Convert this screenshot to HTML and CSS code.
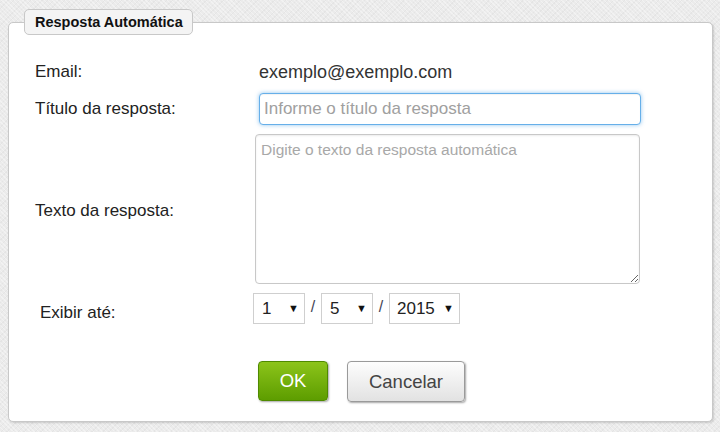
FILE: index.html
```html
<!DOCTYPE html>
<html lang="pt">
<head>
<meta charset="utf-8">
<link rel="stylesheet" href="styles.css">
</head>
<body>
<div class="panel">
  <div class="legend">Resposta Automática</div>
  <div class="form">
    <div class="row row-email">
      <div class="label">Email:</div>
      <div class="value">exemplo@exemplo.com</div>
    </div>
    <div class="row row-title">
      <div class="label">Título da resposta:</div>
      <input class="input focus" type="text" placeholder="Informe o título da resposta">
    </div>
    <div class="row row-text">
      <div class="label">Texto da resposta:</div>
      <textarea class="textarea" placeholder="Digite o texto da resposta automática"></textarea>
    </div>
    <div class="row row-date">
      <div class="label label-date">Exibir até:</div>
      <div class="date">
        <div class="sel sel-sm"><span>1</span><span class="arrow">▼</span></div>
        <span class="slash">/</span>
        <div class="sel sel-sm"><span>5</span><span class="arrow">▼</span></div>
        <span class="slash">/</span>
        <div class="sel sel-lg"><span>2015</span><span class="arrow">▼</span></div>
      </div>
    </div>
    <div class="actions">
      <button class="btn btn-ok">OK</button>
      <button class="btn btn-cancel">Cancelar</button>
    </div>
  </div>
</div>
</body>
</html>
```
FILE: styles.css
```css
* { box-sizing: border-box; }
html, body { margin: 0; padding: 0; }
body {
  width: 720px;
  height: 432px;
  overflow: hidden;
  font-family: "Liberation Sans", Arial, sans-serif;
  background-color: #ebebeb;
  background-image:
    repeating-linear-gradient(45deg, rgba(255,255,255,0.35) 0 1px, transparent 1px 3px),
    repeating-linear-gradient(-45deg, rgba(0,0,0,0.03) 0 1px, transparent 1px 4px);
  padding-top: 22px;
}
.panel {
  position: relative;
  margin: 0 7px 0 8px;
  height: 400px;
  background: #fff;
  border: 1px solid #c8c8c8;
  border-radius: 5px;
  box-shadow: 1px 1px 2px rgba(0,0,0,0.15);
}
.legend {
  position: absolute;
  left: 15px;
  top: -14px;
  width: 169px;
  height: 26px;
  background: #f4f4f4;
  border: 1px solid #c8c8c8;
  border-radius: 5px;
  font-weight: bold;
  font-size: 14.5px;
  color: #111;
  padding-left: 10px;
  line-height: 24px;
}
.form {
  padding: 39px 0 0 26px;
  display: flex;
  flex-direction: column;
}
.row {
  display: flex;
  align-items: center;
}
.label {
  width: 224px;
  flex: none;
  font-size: 17px;
  color: #222;
  line-height: 20px;
}
.value {
  font-size: 18px;
  color: #333;
  line-height: 20px;
}
.row-email { height: 20px; }
.row-title { margin-top: 11px; }
.input {
  width: 382px;
  height: 32px;
  border: 1px solid #66afe9;
  border-radius: 4px;
  box-shadow: 0 0 4px rgba(102,175,233,0.7), inset 0 1px 1px rgba(0,0,0,0.05);
  font-family: inherit;
  font-size: 17px;
  padding: 0 4px;
  outline: none;
  color: #333;
}
.input::placeholder { color: #a0a0a0; }
.row-text { margin-top: 9px; }
.row-text .label { padding-top: 3px; }
.textarea {
  width: 385px;
  height: 150px;
  margin-left: -4px;
  border: 1px solid #c8c8c8;
  border-radius: 4px;
  box-shadow: inset 0 1px 2px rgba(0,0,0,0.08);
  font-family: inherit;
  font-size: 15.5px;
  padding: 6px 5px;
  resize: both;
  outline: none;
}
.textarea::placeholder { color: #a8a8a8; }
.row-date { margin-top: 9px; }
.label-date { padding-left: 5px; padding-top: 9px; }
.date {
  margin-left: -6px;
  display: flex;
  align-items: center;
}
.sel {
  position: relative;
  height: 31px;
  border: 1px solid #cfcfcf;
  font-size: 17px;
  color: #222;
  line-height: 29px;
  padding-left: 8px;
  background: #fff;
}
.sel-sm { width: 52px; }
.sel-lg { width: 71px; padding-left: 7px; }
.arrow {
  position: absolute;
  right: 5px;
  top: 0;
  font-size: 11px;
  color: #111;
}
.slash {
  width: 16px;
  text-align: center;
  font-size: 16px;
  color: #445;
  margin-top: -4px;
}
.actions {
  margin-top: 37px;
  margin-left: 223px;
  display: flex;
  gap: 19px;
  align-items: flex-start;
}
.btn {
  font-family: inherit;
  font-size: 18.5px;
  border-radius: 4px;
  cursor: pointer;
  padding: 0;
}
.btn-ok {
  width: 70px;
  height: 40px;
  color: #fff;
  border: 1px solid #4f8a00;
  background: linear-gradient(#8cc41a, #5d9d00);
  box-shadow: 1px 1px 2px rgba(0,0,0,0.35);
}
.btn-cancel {
  width: 118px;
  height: 41px;
  color: #444;
  border: 1px solid #9a9a9a;
  background: linear-gradient(#fdfdfd, #e2e2e2);
  box-shadow: 1px 1px 2px rgba(0,0,0,0.35);
}
```
